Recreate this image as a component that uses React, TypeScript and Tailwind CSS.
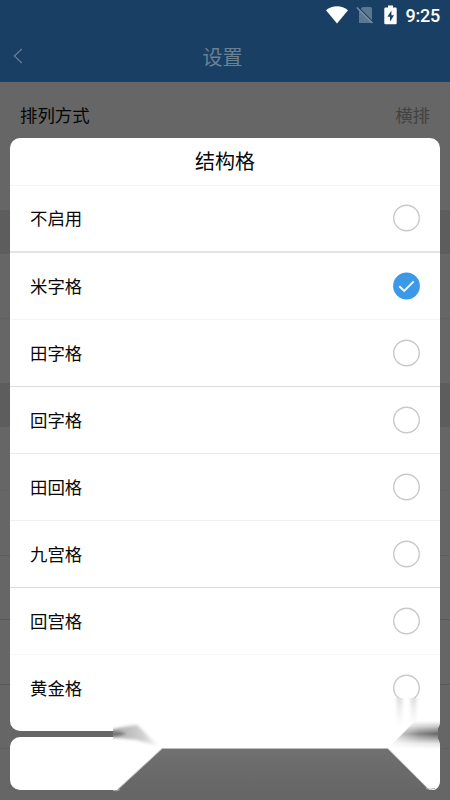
import React from "react";

const options: { label: string; divider: string }[] = [
  { label: "不启用", divider: "bg-[#e5e5e5] h-[2px]" },
  { label: "米字格", divider: "bg-[#f5f5f5] h-px" },
  { label: "田字格", divider: "bg-[#dedede] h-px" },
  { label: "回字格", divider: "bg-[#ebebeb] h-px" },
  { label: "田回格", divider: "bg-[#efefef] h-px" },
  { label: "九宫格", divider: "bg-[#dcdcdc] h-px" },
  { label: "回宫格", divider: "bg-[#f7f7f7] h-px" },
  { label: "黄金格", divider: "h-px" },
];

function StatusBar() {
  return (
    <div className="flex h-[30px] items-center justify-end pr-[8.500px] text-white">
      <svg className="mr-[7.500px] h-[20px] w-[24px]" viewBox="0 0 24 20">
        <path d="M1 5.200C7.200-.2 16.800-.2 23 5.200L12 18.500Z" fill="#fff" />
      </svg>
      <svg className="mr-[10px] h-[18px] w-[18px]" viewBox="0 0 18 18">
        <path d="M6.500 1H14.500Q16 1 16 2.500V17H3V4.500Z" fill="#5b7892" />
        <path d="M1.400 .6 17 16.200" stroke="#194064" strokeWidth="1.400" />
        <path d="M.8 1.500 16.300 17" stroke="#7b92a7" strokeWidth="1.400" />
      </svg>
      <svg className="mr-[8.500px] h-[20px] w-[13px]" viewBox="0 0 13 20">
        <path d="M4 .5H9V2.500H11.500Q12.700 2.500 12.700 3.700V18Q12.700 19.300 11.500 19.300H1.500Q.3 19.300 .3 18V3.700Q.3 2.500 1.500 2.500H4Z" fill="#fff" />
        <path d="M7.400 5.500 3.400 11.800H6V16.700L10 10.300H7.400Z" fill="#194064" />
      </svg>
      <span className="w-[36px] pt-px font-['Roboto',sans-serif] text-[18px] font-medium leading-[29px] tracking-[-0.2px]">9:25</span>
    </div>
  );
}

function Header() {
  return (
    <header className="h-[82px] bg-[#194064]">
      <StatusBar />
      <div className="grid h-[52px] grid-cols-[40px_1fr_45px] items-center">
        <svg className="ml-[12px] h-[16px] w-[12px]" viewBox="0 0 12 16" fill="none">
          <path d="M9.800 1 2.300 8 9.800 15" stroke="#687f94" strokeWidth="1.200" />
        </svg>
        <h1 className="pt-px text-center text-[20px] leading-[51px] text-[#6a8194]">设置</h1>
      </div>
    </header>
  );
}

function SettingsPage() {
  return (
    <div className="flex h-[800px] flex-col bg-[#666]">
      <Header />
      <div className="flex h-[128px] items-start justify-between px-[20px] pt-[20px] text-[17.400px] leading-[26px]">
        <span className="text-[#050505]">排列方式</span>
        <span className="text-[#424242]">横排</span>
      </div>
      <div className="h-[44px] bg-[#5d5d5d]" />
      <div className="h-[65px] border-b border-[#606060]" />
      <div className="h-[64px]" />
      <div className="h-[44px] bg-[#5d5d5d]" />
      <div className="h-[64px] border-b border-[#626262]" />
      <div className="h-[65px] border-b border-[#5d5d5d]" />
      <div className="h-[64px] border-b border-[#585858]" />
      <div className="h-[65px] border-b border-[#585858]" />
      <div className="h-[64px] border-b border-[#606060]" />
    </div>
  );
}

function Radio({ checked }: { checked: boolean }) {
  return (
    <svg className="h-[28px] w-[28px]" viewBox="0 0 28 28" fill="none">
      {checked ? (
        <>
          <circle cx="13.500" cy="14" r="13.400" fill="#3d98e8" />
          <path d="m6.300 14.200 4.900 4.700 9.500-9.600" stroke="#f4fbff" strokeWidth="1.900" />
        </>
      ) : (
        <circle cx="13.500" cy="14" r="12.800" stroke="#c9c9c9" strokeWidth="1.400" />
      )}
    </svg>
  );
}

function SmudgedCorner() {
  return (
    <svg className="pointer-events-none absolute left-0 top-[690px] h-[110px] w-[450px]" viewBox="0 690 450 110">
      <defs>
        <linearGradient id="panel" x1="0" y1="0" x2="0" y2="1">
          <stop offset="0" stopColor="#707070" />
          <stop offset="1" stopColor="#666" />
        </linearGradient>
        <linearGradient id="rightBand" x1="0" y1="721" x2="0" y2="749" gradientUnits="userSpaceOnUse">
          <stop offset="0" stopColor="#fff" />
          <stop offset=".2" stopColor="#c8c8c8" />
          <stop offset=".36" stopColor="#888" />
          <stop offset=".46" stopColor="#666" />
          <stop offset=".62" stopColor="#a0a0a0" />
          <stop offset=".8" stopColor="#e4e4e4" />
          <stop offset="1" stopColor="#fff" />
        </linearGradient>
        <linearGradient id="rightFade" x1="390" y1="0" x2="438" y2="0" gradientUnits="userSpaceOnUse">
          <stop offset="0" stopColor="#fff" stopOpacity=".85" />
          <stop offset=".6" stopColor="#fff" stopOpacity=".22" />
          <stop offset="1" stopColor="#fff" stopOpacity="0" />
        </linearGradient>
        <linearGradient id="leftBand" x1="113" y1="0" x2="159" y2="0" gradientUnits="userSpaceOnUse">
          <stop offset="0" stopColor="#999" />
          <stop offset=".25" stopColor="#bababa" />
          <stop offset=".65" stopColor="#d0d0d0" />
          <stop offset="1" stopColor="#fff" />
        </linearGradient>
        <linearGradient id="streak" x1="0" y1="0" x2="0" y2="1">
          <stop offset="0" stopColor="#dedede" />
          <stop offset=".4" stopColor="#f0f0f0" />
          <stop offset="1" stopColor="#fff" />
        </linearGradient>
        <filter id="soft" x="-20%" y="-30%" width="140%" height="160%">
          <feGaussianBlur stdDeviation="1.800" />
        </filter>
        <filter id="streakSoft" x="-80%" y="-10%" width="260%" height="120%">
          <feGaussianBlur stdDeviation="1.700 .5" />
        </filter>
        <filter id="edge" x="-10%" y="-20%" width="120%" height="140%">
          <feGaussianBlur stdDeviation=".7" />
        </filter>
        <filter id="core" x="-30%" y="-60%" width="160%" height="220%">
          <feGaussianBlur stdDeviation="1.300" />
        </filter>
        <clipPath id="cards">
          <path d="M113 698H440V721Q440 725 438 728V739Q440 742 440 746V780Q440 788 434 790H113Z" />
        </clipPath>
      </defs>
      <path d="M430 720H442V752H430Z" fill="#666" />
      <g clipPath="url(#cards)">
        <rect x="113" y="698.500" width="327" height="92" fill="#fff" />
        <rect x="396.500" y="698" width="6" height="28" fill="url(#streak)" filter="url(#streakSoft)" />
        <rect x="410.500" y="698" width="6" height="28" fill="url(#streak)" filter="url(#streakSoft)" />
        <path d="M109 730.500Q124 726 137 725L160 747 137 740 109 737Z" fill="url(#leftBand)" filter="url(#soft)" />
        <path d="M108 731.500H116L127 733.500 117 736 108 736.500Z" fill="#777" filter="url(#core)" />
        <g filter="url(#edge)">
          <path d="M416 720H446V749H388Z" fill="url(#rightBand)" />
          <path d="M416 720H446V749H388Z" fill="url(#rightFade)" />
        </g>
      </g>
      <path d="M162 749H388L430 790.500H117Z" fill="url(#panel)" filter="url(#edge)" />
      <path d="M162 748.500H388" stroke="#bdbdbd" strokeWidth="1.200" />
      <path d="M117 790 162 748.500M388 748.500 428 789" stroke="#aaa" strokeWidth="1" opacity=".7" filter="url(#edge)" />
      <path d="M113 790.500Q117 791.500 120 789.500M426 788.500Q430 790 435 788.500" stroke="#aaa" strokeWidth="1" fill="none" filter="url(#edge)" />
    </svg>
  );
}

function FormatSheet() {
  return (
    <div className="absolute inset-0 px-[10px] pt-[137.500px]">
      <section className="h-[593.500px] overflow-hidden rounded-[10px] bg-white">
        <h2 className="h-[48px] border-b border-[#f5f5f5] text-center text-[20px] leading-[46px] text-[#080808]">结构格</h2>
        {options.map(({ label, divider }) => (
          <div key={label} className="flex h-[67.100px] flex-col">
            <div className="flex min-h-0 flex-1 items-center justify-between pl-[20px] pr-[19.500px]">
              <span className="text-[17.400px] leading-[26px] text-[#080808]">{label}</span>
              <Radio checked={label === "米字格"} />
            </div>
            <div className={divider} />
          </div>
        ))}
      </section>
      <section className="mt-[6px] h-[53px] rounded-[10px] bg-white" />
      <SmudgedCorner />
    </div>
  );
}

export default function App() {
  return (
    <main className="relative h-[800px] w-[450px] overflow-hidden font-['Noto_Sans_CJK_SC','Noto_Sans',sans-serif]">
      <SettingsPage />
      <FormatSheet />
    </main>
  );
}
